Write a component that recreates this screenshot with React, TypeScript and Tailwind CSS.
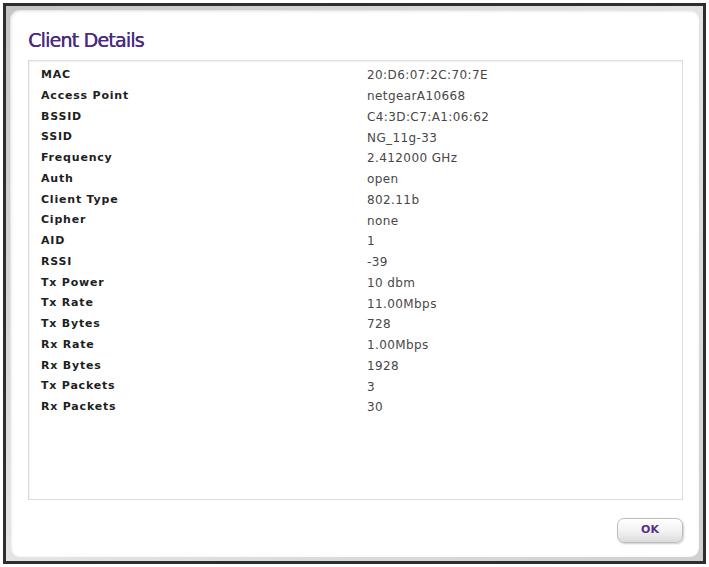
import React from 'react';

interface DetailRow {
  label: string;
  value: string;
}

const details: DetailRow[] = [
  { label: 'MAC', value: '20:D6:07:2C:70:7E' },
  { label: 'Access Point', value: 'netgearA10668' },
  { label: 'BSSID', value: 'C4:3D:C7:A1:06:62' },
  { label: 'SSID', value: 'NG_11g-33' },
  { label: 'Frequency', value: '2.412000 GHz' },
  { label: 'Auth', value: 'open' },
  { label: 'Client Type', value: '802.11b' },
  { label: 'Cipher', value: 'none' },
  { label: 'AID', value: '1' },
  { label: 'RSSI', value: '-39' },
  { label: 'Tx Power', value: '10 dbm' },
  { label: 'Tx Rate', value: '11.00Mbps' },
  { label: 'Tx Bytes', value: '728' },
  { label: 'Rx Rate', value: '1.00Mbps' },
  { label: 'Rx Bytes', value: '1928' },
  { label: 'Tx Packets', value: '3' },
  { label: 'Rx Packets', value: '30' },
];

export default function App() {
  return (
    <div className="bg-white w-[709px] h-[567px] p-[3px] font-['DejaVu_Sans',Verdana,sans-serif]">
      <div className="h-full border-[3px] border-[#2e2e2e] bg-gradient-to-br from-[#c4c4c4] via-[#e4e4e4] to-[#d0d0d0] p-[4px]">
        <div className="h-full bg-white rounded-[9px] shadow-[inset_1px_1px_3px_rgba(0,0,0,0.15)] pt-[18px] pl-[18px] pr-[16px] flex flex-col">
          <h1 className="text-[19px] leading-[24px] text-[#4a2b80] tracking-[-0.8px] h-[24px] [text-shadow:0.4px_0_0_#4a2b80]">
            Client Details
          </h1>

          <div className="mt-[8px] h-[440px] border border-[#dcdcdc] shadow-[inset_1px_1px_2px_rgba(0,0,0,0.06)] pt-[4px] pl-[12px]">
            {details.map((row) => (
              <div key={row.label} className="grid grid-cols-[326px_1fr] h-[20.75px] items-center">
                <span className="text-[11px] font-bold tracking-[0.8px] text-[#1e1e1e]">{row.label}</span>
                <span className="text-[12px] tracking-[0.4px] text-[#474747]">{row.value}</span>
              </div>
            ))}
          </div>

          <div className="flex justify-end mt-[18px]">
            <button className="w-[66px] h-[25px] rounded-[7px] border border-[#bdbdbd] bg-gradient-to-b from-white via-[#f3f3f3] to-[#dcdcdc] shadow-[1px_1px_2px_rgba(0,0,0,0.2)] text-[11px] font-bold text-[#55308a]">
              OK
            </button>
          </div>
        </div>
      </div>
    </div>
  );
}
